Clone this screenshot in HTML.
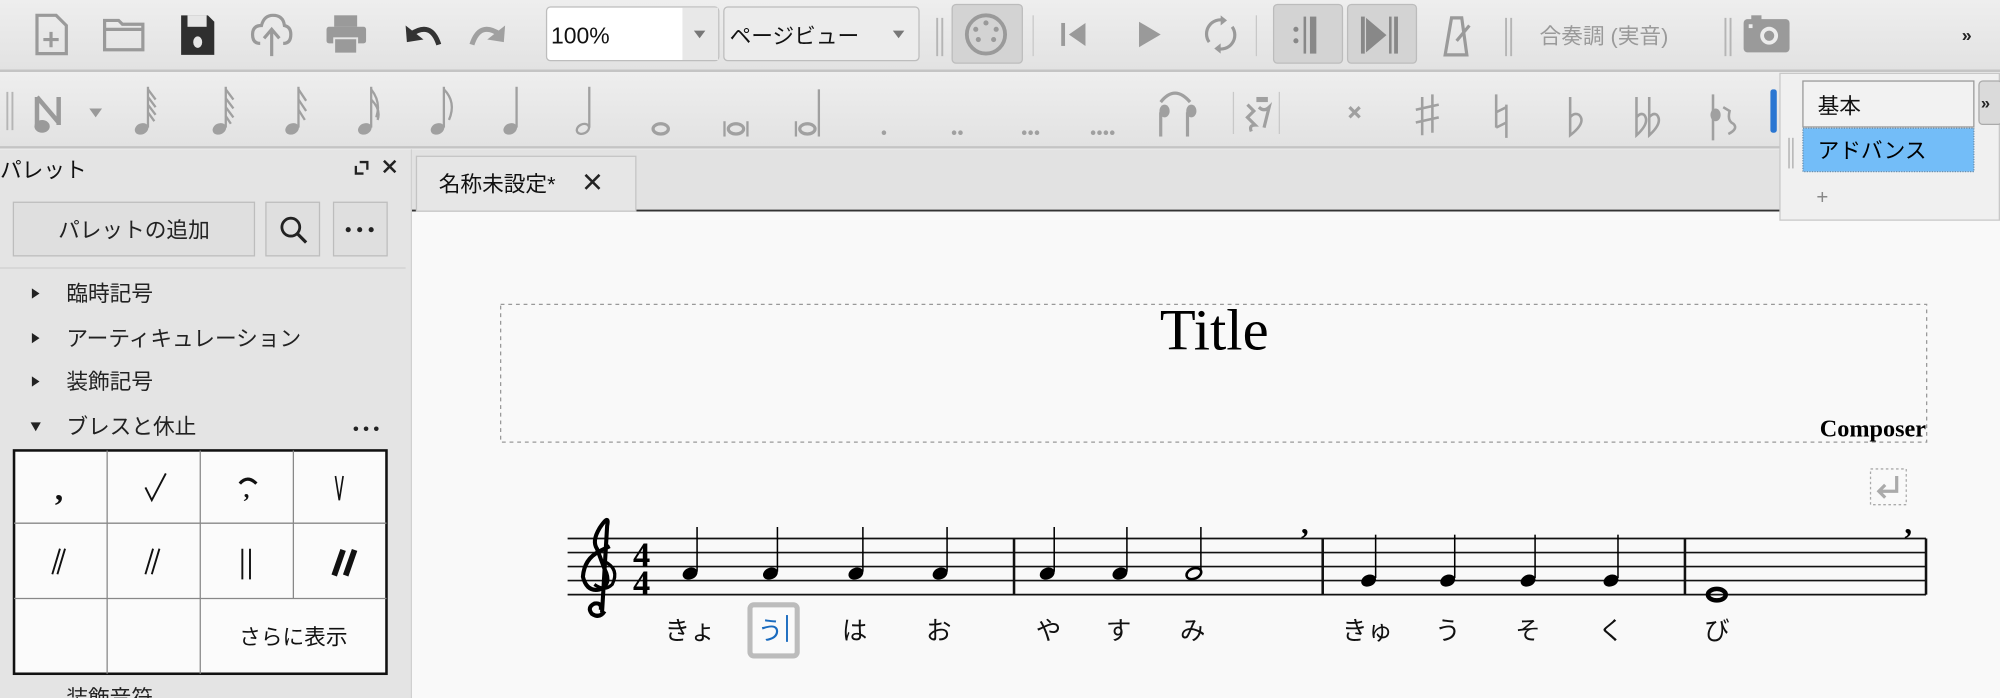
<!DOCTYPE html>
<html><head><meta charset="utf-8"><style>
html,body{margin:0;padding:0;width:2000px;height:698px;overflow:hidden;background:#f9f9f9}
svg{display:block}
text{font-family:"Liberation Sans","Noto Sans CJK JP",sans-serif}
.s{font-family:"Liberation Serif","Noto Serif CJK SC",serif}
</style></head><body>
<svg width="2000" height="698" viewBox="0 0 1568 547" preserveAspectRatio="none" xmlns="http://www.w3.org/2000/svg">
<defs>
<linearGradient id="tb" x1="0" y1="0" x2="0" y2="1"><stop offset="0" stop-color="#eeeeee"/><stop offset="1" stop-color="#e2e2e2"/></linearGradient>
</defs>
<rect x="0" y="0" width="1568" height="547" fill="#f9f9f9"/>
<rect x="0" y="0" width="1568" height="55" fill="url(#tb)"/>
<line x1="0" y1="55.5" x2="1568" y2="55.5" stroke="#c4c4c4" stroke-width="2"/>
<rect x="0" y="57" width="1568" height="58" fill="url(#tb)"/>
<line x1="0" y1="115.5" x2="1568" y2="115.5" stroke="#c4c4c4" stroke-width="2"/>
<rect x="0" y="117" width="322" height="430" fill="#e4e4e4"/>
<line x1="322.5" y1="117" x2="322.5" y2="547" stroke="#cfcfcf"/>
<rect x="323" y="117" width="1245" height="48" fill="#e2e2e2"/>
<line x1="323" y1="165" x2="1568" y2="165" stroke="#333" stroke-width="1.5"/>

<!-- toolbar 1 -->
<g fill="none" stroke="#9a9a9a" stroke-width="2.5">
 <path d="M29 12 H44 L52 20 V42 H29 Z"/><path d="M40 25 V37 M34 31 H46" stroke-width="2.5"/>
 <path d="M82 16 H93 L96 19 H112 V39 H82 Z"/><path d="M82 23 H112"/>
</g>
<path d="M142 12 H163 L168 17 V43 H142 Z" fill="#2f2f2f"/>
<rect x="147" y="12" width="15" height="9" fill="#e6e6e6"/><ellipse cx="155" cy="33" rx="3.5" ry="4.5" fill="#e6e6e6"/>
<path d="M204 34 Q198 34 198 27 Q198 20 205 20 Q207 12 214 12 Q222 12 223 20 Q228 21 228 27 Q228 34 222 34" fill="none" stroke="#9a9a9a" stroke-width="2.5"/>
<path d="M213 44 V24 M207 30 L213 23 L219 30" fill="none" stroke="#9a9a9a" stroke-width="2.5"/>
<rect x="262" y="12" width="18" height="9" fill="#9a9a9a"/><rect x="256" y="21" width="31" height="13" rx="2" fill="#9a9a9a"/><rect x="262" y="30" width="18" height="12" fill="#9a9a9a" stroke="#e6e6e6" stroke-width="1.5"/>
<path d="M318 20 L319 33 L332 31 Z" fill="#333"/><path d="M322 27 Q338 16 344 35" fill="none" stroke="#333" stroke-width="4"/>
<path d="M396 20 L395 33 L382 31 Z" fill="#a0a0a0"/><path d="M392 27 Q376 16 370 35" fill="none" stroke="#a0a0a0" stroke-width="4"/>
<rect x="428.5" y="5.5" width="135" height="42" rx="3" fill="#fff" stroke="#bdbdbd"/>
<rect x="535" y="6" width="28" height="41" fill="#e8e8e8"/>
<text x="432" y="34" font-size="18" fill="#111">100%</text>
<path d="M544 24 H553 L548.5 30 Z" fill="#777"/>
<rect x="567.5" y="5.5" width="153" height="42" rx="3" fill="#ececec" stroke="#bdbdbd"/>
<text x="572" y="34" font-size="17" fill="#111">ページビュー</text>
<path d="M700 24 H709 L704.5 30 Z" fill="#777"/>
<g fill="#b5b5b5"><rect x="734" y="14" width="1.5" height="30"/><rect x="738" y="14" width="1.5" height="30"/>
<rect x="1180" y="14" width="1.5" height="30"/><rect x="1184" y="14" width="1.5" height="30"/>
<rect x="1352" y="14" width="1.5" height="30"/><rect x="1356" y="14" width="1.5" height="30"/></g>
<rect x="746.5" y="3.5" width="55" height="46" rx="3" fill="#d3d3d3" stroke="#bcbcbc"/>
<circle cx="773" cy="27" r="15" fill="none" stroke="#9a9a9a" stroke-width="3"/>
<g fill="#9a9a9a"><circle cx="773" cy="18" r="2"/><circle cx="765" cy="23" r="2"/><circle cx="781" cy="23" r="2"/><circle cx="767" cy="31" r="2"/><circle cx="779" cy="31" r="2"/></g>
<line x1="810" y1="12" x2="810" y2="44" stroke="#c8c8c8"/>
<rect x="832" y="18" width="3" height="18" fill="#9a9a9a"/><path d="M851 18 V36 L838 27 Z" fill="#9a9a9a"/>
<path d="M893 17 V37 L910 27 Z" fill="#9a9a9a"/>
<path d="M948 33 A11 11 0 0 1 960 16 M966 21 A11 11 0 0 1 954 38" fill="none" stroke="#9a9a9a" stroke-width="2.5"/>
<path d="M957 12 L962 16 L957 20 Z M957 42 L952 38 L957 34 Z" fill="#9a9a9a"/>
<line x1="985" y1="12" x2="985" y2="44" stroke="#c8c8c8"/>
<rect x="998.5" y="3.5" width="54" height="46" rx="3" fill="#d3d3d3" stroke="#bcbcbc"/>
<rect x="1056.5" y="3.5" width="54" height="46" rx="3" fill="#d3d3d3" stroke="#bcbcbc"/>
<circle cx="1016" cy="23" r="2" fill="#888"/><circle cx="1016" cy="32" r="2" fill="#888"/><rect x="1022" y="13" width="2" height="29" fill="#888"/><rect x="1027" y="13" width="5" height="29" fill="#888"/>
<rect x="1067" y="13" width="3" height="29" fill="#888"/><path d="M1071 14 V41 L1087 27.5 Z" fill="#888"/><rect x="1089" y="13" width="2" height="29" fill="#888"/><rect x="1093" y="13" width="3" height="29" fill="#888"/>
<path d="M1133 43 L1138 14 H1146 L1150 43 Z M1142 32 L1152 20" fill="none" stroke="#9a9a9a" stroke-width="2.5"/>
<text x="1207" y="34" font-size="17" fill="#9a9a9a">合奏調 (実音)</text>
<rect x="1367" y="15" width="36" height="26" rx="3" fill="#9a9a9a"/><rect x="1373" y="12" width="8" height="5" fill="#9a9a9a"/><circle cx="1387" cy="28" r="7" fill="#ececec"/><circle cx="1387" cy="28" r="4" fill="#9a9a9a"/><rect x="1371" y="19" width="3" height="3" fill="#ececec"/>
<text x="1538" y="32" font-size="14" font-weight="bold" fill="#222">»</text>

<!-- toolbar 2 -->
<g fill="#b5b5b5"><rect x="5" y="72" width="1.5" height="30"/><rect x="9" y="72" width="1.5" height="30"/></g>
<g fill="#9a9a9a" stroke="#9a9a9a">
 <path d="M29 76 V98 M46 76 V98 M29 76 L46 96" stroke-width="3.5" fill="none"/><ellipse cx="33" cy="99" rx="6" ry="5" stroke="none"/>
 <path d="M70 85 H80 L75 92 Z" stroke="none"/>
</g>
<g fill="#a0a0a0" stroke="#a0a0a0" stroke-width="1.8">
 <g><ellipse cx="111" cy="101" rx="5.5" ry="4.3" transform="rotate(-25 111 101)" stroke="none"/><line x1="116" y1="100" x2="116" y2="68"/><path d="M116 70 l6 8 M116 76 l6 8 M116 82 l6 8 M116 88 l5 7" fill="none"/></g>
 <g><ellipse cx="172" cy="101" rx="5.5" ry="4.3" transform="rotate(-25 172 101)" stroke="none"/><line x1="177" y1="100" x2="177" y2="68"/><path d="M177 70 l6 8 M177 77 l6 8 M177 84 l6 8 M177 91 l4 6" fill="none"/></g>
 <g><ellipse cx="229" cy="101" rx="5.5" ry="4.3" transform="rotate(-25 229 101)" stroke="none"/><line x1="234" y1="100" x2="234" y2="68"/><path d="M234 70 l6 9 M234 78 l6 9 M234 86 l5 8" fill="none"/></g>
 <g><ellipse cx="286" cy="101" rx="5.5" ry="4.3" transform="rotate(-25 286 101)" stroke="none"/><line x1="291" y1="100" x2="291" y2="68"/><path d="M291 70 q8 10 4 22 M291 78 q8 8 5 16" fill="none"/></g>
 <g><ellipse cx="343" cy="101" rx="5.5" ry="4.3" transform="rotate(-25 343 101)" stroke="none"/><line x1="348" y1="100" x2="348" y2="68"/><path d="M348 70 q10 10 4 24" fill="none"/></g>
 <g><ellipse cx="400" cy="101" rx="5.5" ry="4.3" transform="rotate(-25 400 101)" stroke="none"/><line x1="405" y1="100" x2="405" y2="68"/></g>
 <g><ellipse cx="457" cy="101" rx="5" ry="3.6" transform="rotate(-25 457 101)" fill="none"/><line x1="462" y1="100" x2="462" y2="68"/></g>
 <ellipse cx="518" cy="101" rx="6" ry="4" fill="none" stroke-width="2.5"/>
 <ellipse cx="577" cy="101" rx="6" ry="4" fill="none" stroke-width="2.5"/><line x1="568" y1="95" x2="568" y2="107"/><line x1="586" y1="95" x2="586" y2="107"/>
 <ellipse cx="633" cy="101" rx="6" ry="4" fill="none" stroke-width="2.5"/><line x1="624" y1="95" x2="624" y2="107"/><line x1="642" y1="70" x2="642" y2="107"/>
</g>
<g fill="#a0a0a0">
 <circle cx="693" cy="104" r="1.8"/>
 <circle cx="748" cy="104" r="1.8"/><circle cx="753" cy="104" r="1.8"/>
 <circle cx="803" cy="104" r="1.8"/><circle cx="808" cy="104" r="1.8"/><circle cx="813" cy="104" r="1.8"/>
 <circle cx="857" cy="104" r="1.8"/><circle cx="862" cy="104" r="1.8"/><circle cx="867" cy="104" r="1.8"/><circle cx="872" cy="104" r="1.8"/>
</g>
<g fill="#a0a0a0" stroke="#a0a0a0" stroke-width="2.5">
 <ellipse cx="913" cy="87" rx="4" ry="5" stroke="none"/><line x1="910" y1="88" x2="910" y2="107"/>
 <ellipse cx="934" cy="87" rx="4" ry="5" stroke="none"/><line x1="931" y1="88" x2="931" y2="107"/>
 <path d="M910 80 Q921 66 933 80" fill="none"/>
</g>
<line x1="967" y1="72" x2="967" y2="105" stroke="#c8c8c8"/><line x1="1003" y1="72" x2="1003" y2="105" stroke="#c8c8c8"/>
<path d="M978 82 l5 5 l-5 5 l6 6 q-5 0 -3 5" fill="none" stroke="#a0a0a0" stroke-width="2.5"/>
<rect x="985" y="76" width="9" height="4" fill="#a0a0a0"/><path d="M987 84 q4 4 8 0 l-4 16" fill="none" stroke="#a0a0a0" stroke-width="2.5"/>
<g fill="none" stroke="#a0a0a0" stroke-width="2.5">
 <path d="M1058 84 l8 8 M1066 84 l-8 8"/>
 <path d="M1115 76 V106 M1123 74 V104 M1110 86 L1128 82 M1110 96 L1128 92" stroke-width="2"/>
 <path d="M1173 74 V100 M1181 82 V108 M1173 88 L1181 84 M1173 100 L1181 96" stroke-width="2"/>
 <path d="M1231 76 V106 Q1244 96 1238 90 Q1234 88 1231 92" stroke-width="2"/>
 <path d="M1283 76 V106 Q1294 96 1289 90 Q1286 88 1283 92 M1293 76 V106 Q1304 96 1299 90 Q1296 88 1293 92" stroke-width="2"/>
 <path d="M1343 74 V110 M1351 84 l5 3 q-2 8 3 10 q4 4 -4 8" stroke-width="2"/>
</g>
<ellipse cx="1345" cy="90" rx="4" ry="5" fill="#a0a0a0"/>
<rect x="1388" y="70" width="5" height="34" rx="2" fill="#2a76d2"/>

<!-- popup -->
<rect x="1395.5" y="57.5" width="172" height="115" fill="#f0f0f0" stroke="#c8c8c8"/>
<rect x="1413.5" y="63.5" width="134" height="36" fill="#f2f2f2" stroke="#999"/>
<text x="1425" y="89" font-size="17" fill="#111">基本</text>
<rect x="1413.5" y="100.5" width="134" height="34" fill="#73bdf8" stroke="#6a8fae" stroke-dasharray="1 1"/>
<text x="1425" y="124" font-size="17" fill="#000">アドバンス</text>
<text x="1424" y="160" font-size="16" fill="#888">+</text>
<g fill="#b5b5b5"><rect x="1402" y="108" width="1.2" height="24"/><rect x="1405" y="108" width="1.2" height="24"/></g>
<rect x="1551.5" y="63.5" width="18" height="34" rx="3" fill="#dadada" stroke="#aaa"/>
<text x="1553" y="85" font-size="13" font-weight="bold" fill="#222">»</text>

<!-- left palette panel -->
<text x="0" y="139" font-size="17" fill="#111">パレット</text>
<path d="M279 130 V136 H285 M282 127 H288 V133" fill="none" stroke="#222" stroke-width="1.8"/>
<path d="M301 126 l9 9 M310 126 l-9 9" stroke="#222" stroke-width="2"/>
<rect x="10.5" y="158.5" width="189" height="42" fill="#dfdfdf" stroke="#bdbdbd"/>
<text x="105" y="186" font-size="17" fill="#222" text-anchor="middle">パレットの追加</text>
<rect x="208.5" y="158.5" width="42" height="42" fill="#dfdfdf" stroke="#bdbdbd"/>
<circle cx="228" cy="178" r="7" fill="none" stroke="#222" stroke-width="2.2"/><line x1="233" y1="183" x2="240" y2="190" stroke="#222" stroke-width="2.5"/>
<rect x="261.5" y="158.5" width="42" height="42" fill="#dfdfdf" stroke="#bdbdbd"/>
<g fill="#222"><circle cx="273" cy="180" r="2"/><circle cx="282" cy="180" r="2"/><circle cx="291" cy="180" r="2"/></g>
<line x1="0" y1="210" x2="318" y2="210" stroke="#cfcfcf"/>
<g fill="#222"><path d="M25 226 L31 230 L25 234 Z"/><path d="M25 261 L31 265 L25 269 Z"/><path d="M25 295 L31 299 L25 303 Z"/><path d="M24 331 L32 331 L28 338 Z"/></g>
<g font-size="17" fill="#222">
<text x="52" y="236">臨時記号</text>
<text x="52" y="271">アーティキュレーション</text>
<text x="52" y="305">装飾記号</text>
<text x="52" y="340">ブレスと休止</text>
<text x="52" y="553">装飾音符</text>
</g>
<g fill="#222"><circle cx="279" cy="336" r="1.8"/><circle cx="287" cy="336" r="1.8"/><circle cx="295" cy="336" r="1.8"/></g>
<rect x="11" y="353" width="292" height="175" fill="#fbfbfb" stroke="#111" stroke-width="2"/>
<g stroke="#888" stroke-width="1">
<line x1="84" y1="353" x2="84" y2="528"/><line x1="157" y1="353" x2="157" y2="528"/><line x1="230" y1="353" x2="230" y2="469"/>
<line x1="11" y1="410" x2="303" y2="410"/><line x1="11" y1="469" x2="303" y2="469"/>
</g>
<text class="s" x="43" y="392" font-size="26" font-weight="bold" fill="#111">,</text>
<path d="M114 382 L119 392 L130 371" fill="none" stroke="#111" stroke-width="1.5"/>
<path d="M188 379 Q194 372 201 379" fill="none" stroke="#111" stroke-width="2.5"/>
<text class="s" x="191" y="390" font-size="18" font-weight="bold" fill="#111">,</text>
<path d="M263 373 L266 392 L269 373" fill="none" stroke="#111" stroke-width="1.3"/>
<path d="M41 450 L47 430 M45 450 L51 430" stroke="#111" stroke-width="1.5"/>
<path d="M114 450 L120 430 M119 450 L125 430" stroke="#111" stroke-width="1.5"/>
<path d="M190 430 V454 M196 430 V454" stroke="#111" stroke-width="1.5"/>
<path d="M262 451 L269 431 M271 451 L278 431" stroke="#111" stroke-width="4.5"/>
<text x="230" y="505" font-size="17" fill="#111" text-anchor="middle">さらに表示</text>

<!-- tab -->
<rect x="326.5" y="122.5" width="172" height="43" fill="#e6e6e6" stroke="#c4c4c4"/>
<text x="344" y="150" font-size="17" fill="#111">名称未設定*</text>
<path d="M459 137 l11 11 M470 137 l-11 11" stroke="#222" stroke-width="2"/>

<!-- score -->
<rect x="392.5" y="238.5" width="1118" height="108" fill="none" stroke="#999" stroke-dasharray="3 3"/>
<text class="s" x="952" y="274" font-size="46" fill="#000" text-anchor="middle">Title</text>
<text class="s" x="1510" y="342" font-size="19" font-weight="bold" fill="#000" text-anchor="end">Composer</text>
<rect x="1466.5" y="367.5" width="28" height="28" fill="none" stroke="#aaa" stroke-dasharray="2 2"/>
<path d="M1487 373 V385 H1474 M1478 380 L1473 385 L1478 390" fill="none" stroke="#aaa" stroke-width="2.5"/>

<g stroke="#111" stroke-width="1.3">
 <line x1="445" y1="422" x2="1510" y2="422"/><line x1="445" y1="433" x2="1510" y2="433"/><line x1="445" y1="444" x2="1510" y2="444"/><line x1="445" y1="455" x2="1510" y2="455"/><line x1="445" y1="466" x2="1510" y2="466"/>
</g>
<g stroke="#111" stroke-width="2">
 <line x1="795" y1="422" x2="795" y2="466"/><line x1="1037" y1="422" x2="1037" y2="466"/><line x1="1321" y1="422" x2="1321" y2="466"/><line x1="1510" y1="422" x2="1510" y2="466"/>
</g>
<path d="M474 479 Q470 485 464 481 Q460 476 466 473 Q472 472 471 478 M472 480 L476 412 Q478 402 470 414 Q464 424 468 430 L474 446 Q480 458 470 462 Q460 464 457 452 Q458 438 470 432 L478 428" fill="none" stroke="#000" stroke-width="3.2"/>
<path d="M474 440 Q486 446 480 458 Q474 464 466 458" fill="none" stroke="#000" stroke-width="2.5"/>
<text class="s" x="503" y="444" font-size="27" font-weight="bold" fill="#000" text-anchor="middle">4</text>
<text class="s" x="503" y="466" font-size="27" font-weight="bold" fill="#000" text-anchor="middle">4</text>
<g fill="#000" stroke="#000" stroke-width="1.2">
 <g><ellipse cx="541" cy="449.5" rx="6" ry="4.5" transform="rotate(-22 541 449.5)" stroke="none"/><line x1="546.5" y1="448" x2="546.5" y2="413"/></g>
 <g><ellipse cx="604" cy="449.5" rx="6" ry="4.5" transform="rotate(-22 604 449.5)" stroke="none"/><line x1="609.5" y1="448" x2="609.5" y2="413"/></g>
 <g><ellipse cx="671" cy="449.5" rx="6" ry="4.5" transform="rotate(-22 671 449.5)" stroke="none"/><line x1="676.5" y1="448" x2="676.5" y2="413"/></g>
 <g><ellipse cx="737" cy="449.5" rx="6" ry="4.5" transform="rotate(-22 737 449.5)" stroke="none"/><line x1="742.5" y1="448" x2="742.5" y2="413"/></g>
 <g><ellipse cx="821" cy="449.5" rx="6" ry="4.5" transform="rotate(-22 821 449.5)" stroke="none"/><line x1="826.5" y1="448" x2="826.5" y2="413"/></g>
 <g><ellipse cx="878" cy="449.5" rx="6" ry="4.5" transform="rotate(-22 878 449.5)" stroke="none"/><line x1="883.5" y1="448" x2="883.5" y2="413"/></g>
 <g><ellipse cx="936" cy="449.5" rx="6" ry="4" transform="rotate(-22 936 449.5)" fill="none" stroke-width="2"/><line x1="941.5" y1="448" x2="941.5" y2="413"/></g>
 <g><ellipse cx="1073" cy="455" rx="6" ry="4.5" transform="rotate(-22 1073 455)" stroke="none"/><line x1="1078.5" y1="453" x2="1078.5" y2="419"/></g>
 <g><ellipse cx="1135" cy="455" rx="6" ry="4.5" transform="rotate(-22 1135 455)" stroke="none"/><line x1="1140.5" y1="453" x2="1140.5" y2="419"/></g>
 <g><ellipse cx="1198" cy="455" rx="6" ry="4.5" transform="rotate(-22 1198 455)" stroke="none"/><line x1="1203.5" y1="453" x2="1203.5" y2="419"/></g>
 <g><ellipse cx="1263" cy="455" rx="6" ry="4.5" transform="rotate(-22 1263 455)" stroke="none"/><line x1="1268.5" y1="453" x2="1268.5" y2="419"/></g>
</g>
<ellipse cx="1346" cy="466" rx="7" ry="4.5" fill="none" stroke="#000" stroke-width="3.5"/>
<text class="s" x="1023" y="418" font-size="24" font-weight="bold" fill="#000" text-anchor="middle">,</text>
<text class="s" x="1496" y="418" font-size="24" font-weight="bold" fill="#000" text-anchor="middle">,</text>

<rect x="588" y="474" width="37" height="40" rx="3" fill="#fafafa" stroke="#bcbcbc" stroke-width="4"/>
<g font-size="20" fill="#111" text-anchor="middle">
 <text x="541" y="501">きょ</text>
 <text x="604" y="501" fill="#1a6bbf">う</text>
 <text x="670" y="501">は</text>
 <text x="736" y="501">お</text>
 <text x="822" y="501">や</text>
 <text x="877" y="501">す</text>
 <text x="935" y="501">み</text>
 <text x="1072" y="501">きゅ</text>
 <text x="1135" y="501">う</text>
 <text x="1198" y="501">そ</text>
 <text x="1263" y="501">く</text>
 <text x="1346" y="501">び</text>
</g>
<line x1="617" y1="482" x2="617" y2="503" stroke="#1a6bbf" stroke-width="1.5"/>
</svg>
</body></html>
